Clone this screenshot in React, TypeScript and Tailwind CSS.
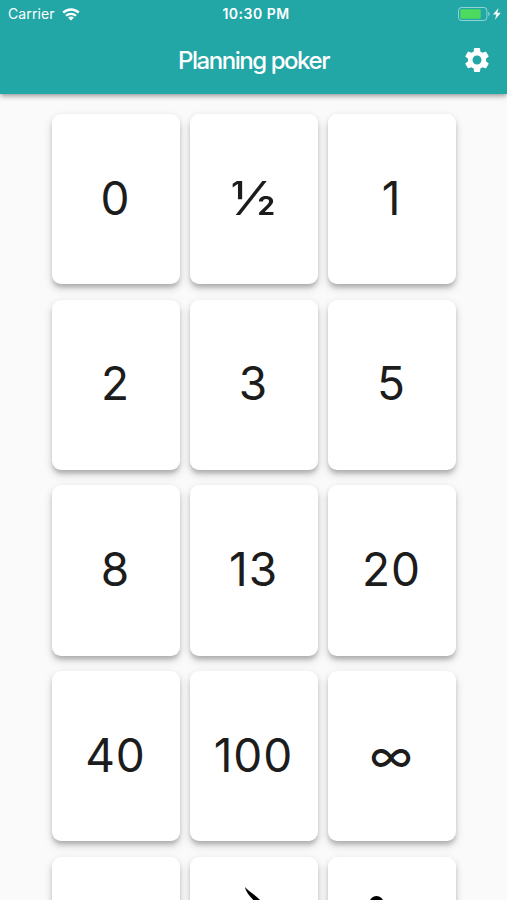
import type { ReactNode } from "react";
import { MdSettings } from "react-icons/md";

type Card = {
  id: string;
  face: ReactNode;
};

function WifiIcon() {
  return (
    <svg width="18" height="13" viewBox="0 0 18 13" fill="none" aria-hidden="true">
      <path d="M1.2 4.7a11.2 11.2 0 0 1 15.6 0" stroke="white" strokeWidth="2.5" />
      <path d="M4 7.8a7.2 7.2 0 0 1 10 0" stroke="white" strokeWidth="2.2" />
      <path d="M9 12.6 6.1 9.8a4 4 0 0 1 5.8 0Z" fill="white" />
    </svg>
  );
}

function BatteryIcon() {
  return (
    <svg width="45" height="15" viewBox="0 0 45 15" fill="none" aria-hidden="true">
      <rect x="0.5" y="0.5" width="28.4" height="13" rx="3" stroke="white" strokeOpacity="0.5" />
      <rect x="2.3" y="2.2" width="20.4" height="9.6" rx="1.2" fill="#4cdb5f" />
      <path d="M30.2 4.8v4.4a2.4 2.4 0 0 0 0-4.4Z" fill="white" fillOpacity="0.5" />
      <path d="M40.6 1 35 7.6h3.4L37 12.8 42.8 5.8h-3.6Z" fill="white" />
    </svg>
  );
}

function SteamFace() {
  return (
    <svg width="60" height="110" viewBox="0 0 60 110" aria-hidden="true">
      <path d="M21 1c3 4 9 7 14 12 7 7 7 16 0 27-2 3-4 5-5 7 1-5 3-9 3-14 0-7-1-13-3-18-3-4-8-8-9-14Z" fill="black" />
      <path d="M6 54h40v24a18 18 0 0 1-18 18h-4A18 18 0 0 1 6 78Z" fill="black" />
    </svg>
  );
}

function LoungeFace() {
  return (
    <svg width="60" height="90" viewBox="0 0 60 90" aria-hidden="true">
      <circle cx="14.5" cy="7" r="7" fill="black" />
      <path d="M8 19h12l8 22h24v7H24L8 32Z" fill="black" />
    </svg>
  );
}

const CARDS: Card[] = [
  { id: "0", face: "0" },
  { id: "half", face: <span className="scale-x-[1.16]">½</span> },
  { id: "1", face: "1" },
  { id: "2", face: "2" },
  { id: "3", face: "3" },
  { id: "5", face: "5" },
  { id: "8", face: "8" },
  { id: "13", face: "13" },
  { id: "20", face: "20" },
  { id: "40", face: "40" },
  { id: "100", face: "100" },
  { id: "infinity", face: "∞" },
  { id: "blank", face: null },
  { id: "coffee", face: <SteamFace /> },
  { id: "break", face: <LoungeFace /> },
];

function PokerCard({ face }: { face: ReactNode }) {
  return (
    <button
      type="button"
      className="flex h-[170.4px] w-32 items-center justify-center rounded-[9px] bg-white pb-0.5 text-[46px] font-[370] tracking-[1px] text-[#1c1c1c] shadow-[0_4px_4px_-1px_rgba(0,0,0,0.18),0_5px_9px_0_rgba(0,0,0,0.15),0_1px_8px_0_rgba(0,0,0,0.05)]"
    >
      {face}
    </button>
  );
}

export default function App() {
  return (
    <div className="flex h-screen flex-col overflow-hidden bg-[#fafafa] font-['Inter',sans-serif]">
      <header className="z-10 h-[94px] shrink-0 bg-[#22a6a6] text-white shadow-[0_2px_4px_-1px_rgba(0,0,0,0.25),0_3px_5px_0_rgba(0,0,0,0.14),0_1px_8px_0_rgba(0,0,0,0.1)]">
        <div className="grid h-7 grid-cols-3 items-center pr-[3px] pl-2">
          <div className="flex items-center gap-[7px] text-sm tracking-[0.1px]">
            <span>Carrier</span>
            <WifiIcon />
          </div>
          <span className="text-center text-sm font-semibold tracking-[0.5px]">10:30 PM</span>
          <div className="flex justify-end pr-px">
            <BatteryIcon />
          </div>
        </div>
        <div className="grid h-16 grid-cols-[1fr_auto_1fr] items-center px-[15px]">
          <h1 className="col-start-2 pt-px text-2xl font-medium tracking-[-1.45px]">Planning poker</h1>
          <button type="button" aria-label="Settings" className="justify-self-end">
            <MdSettings size={30} />
          </button>
        </div>
      </header>

      <main className="grid grid-cols-[repeat(3,128px)] justify-center gap-x-2.5 gap-y-[15.3px] pt-5">
        {CARDS.map((card) => (
          <PokerCard key={card.id} face={card.face} />
        ))}
      </main>
    </div>
  );
}
